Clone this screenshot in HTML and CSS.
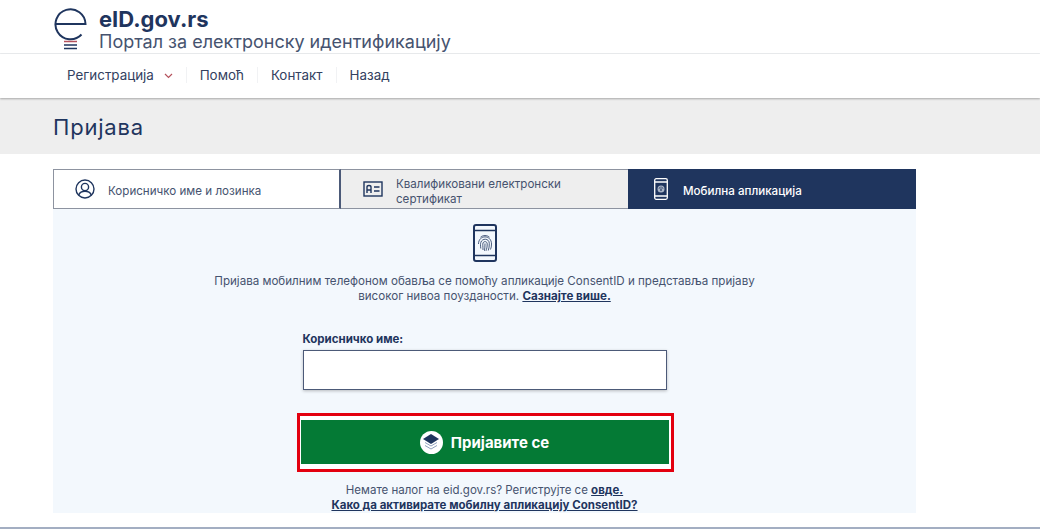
FILE: index.html
```html
<!DOCTYPE html>
<html lang="sr">
<head>
    <meta charset="UTF-8">
    <meta name="viewport" content="width=device-width, initial-scale=1.0">
    <title>Пријава</title>
    <link rel="stylesheet" href="styles.css">
</head>
<body>

<header class="site-header">
    <svg class="logo" width="34" height="44" viewBox="0 0 34 44" fill="none">
        <path d="M1.500 17 H31.500 A15 15 0 1 0 27.500 27.500" stroke="#1f355e" stroke-width="2"/>
        <path d="M10 34.500 H23" stroke="#b5525c" stroke-width="1.500"/>
        <path d="M10 38 H23 M10 41.500 H23" stroke="#1f355e" stroke-width="1.500"/>
    </svg>
    <div class="brand">
        <div class="brand-name">eID.gov.rs</div>
        <div class="brand-sub">Портал за електронску идентификацију</div>
    </div>
</header>

<nav class="main-nav">
    <a class="nav-item">Регистрација
        <svg class="caret" width="9" height="6" viewBox="0 0 9 6" fill="none"><path d="M1 1 L4.500 4.500 L8 1" stroke="#b5525c" stroke-width="1.200"/></svg>
    </a>
    <a class="nav-item">Помоћ</a>
    <a class="nav-item">Контакт</a>
    <a class="nav-item nav-last">Назад</a>
</nav>

<div class="page-title">
    <h1>Пријава</h1>
</div>

<main class="login">
    <div class="tabs">
        <div class="tab tab-user">
            <svg width="20" height="20" viewBox="0 0 20 20" fill="none" stroke="#1f355e" stroke-width="1.400">
                <circle cx="10" cy="10" r="9"/>
                <circle cx="10" cy="8" r="3.600"/>
                <path d="M3.800 16 C5 12.800 7.500 12.300 10 12.300 C12.500 12.300 15 12.800 16.200 16"/>
            </svg>
            <span>Корисничко име и лозинка</span>
        </div>
        <div class="tab tab-cert">
            <svg width="20" height="16" viewBox="0 0 20 16" fill="none" stroke="#1f355e" stroke-width="1.400">
                <rect x="1" y="1" width="18" height="14"/>
                <path d="M4 12 V6 Q4 4.500 6 4.500 Q8 4.500 8 6 V12 M4 9 H8"/>
                <path d="M11 6 H16.500 M11 10 H16.500"/>
            </svg>
            <span>Квалификовани електронски сертификат</span>
        </div>
        <div class="tab tab-mobile">
            <svg width="14" height="22" viewBox="0 0 14 22" fill="none" stroke="#fff" stroke-width="1.300">
                <rect x="0.700" y="0.700" width="12.600" height="20.600" rx="1.500"/>
                <path d="M0.700 4 H13.300 M0.700 18 H13.300"/>
                <circle cx="7" cy="11" r="3.500" fill="#aab4c6" stroke="none"/>
                <path d="M5 11 A2 2 0 0 1 9 11 M6.500 13 V11 A0.500 0.500 0 0 1 7.500 11 V13" stroke="#1f355e" stroke-width="0.600"/>
            </svg>
            <span>Мобилна апликација</span>
        </div>
    </div>

    <section class="panel">
        <svg class="phone" width="24" height="38" viewBox="0 0 24 38" fill="none" stroke="#1f355e">
            <rect x="1" y="1" width="22" height="36" rx="2" stroke-width="2"/>
            <path d="M1 6.500 H23 M1 31.500 H23" stroke-width="1.500"/>
            <g stroke-width="0.800">
                <path d="M5.500 20 C5.500 10.500 18.500 10.500 18.500 20 C18.500 22 18.200 24 17.500 25.500"/>
                <path d="M7.800 24.500 C7.300 21 7.500 19.500 7.800 18.500 C9 14 16.300 14 16.300 19.500 C16.300 22 16 24.500 15.300 26.500"/>
                <path d="M10 26 C10 22 9.500 20.500 10 19 C11 16.800 14.200 17.200 14.200 20 C14.200 23 13.700 25 13 26.800"/>
                <path d="M12 19.500 C12 22 11.800 24.500 11.500 26.800"/>
                <path d="M7.500 13.200 C10 11 14 11 16.500 13.200"/>
            </g>
        </svg>

        <p class="intro">Пријава мобилним телефоном обавља се помоћу апликације ConsentID и представља пријаву високог нивоа поузданости. <a class="link">Сазнајте више.</a></p>

        <form class="login-form">
            <label class="field-label" for="username">Корисничко име:</label>
            <input class="field-input" id="username" type="text">
            <div class="btn-frame">
                <button class="btn-login" type="button">
                    <span class="btn-icon">
                        <svg width="18" height="16" viewBox="0 0 18 16" fill="none">
                            <path d="M9 0 L17 5 L9 10 L1 5 Z" fill="#1f355e"/>
                            <path d="M3 8.500 L9 12 L15 8.500 M3 11.500 L9 15 L15 11.500" stroke="#8fa0bd" stroke-width="1"/>
                        </svg>
                    </span>
                    Пријавите се
                </button>
            </div>
        </form>

        <p class="foot">Немате налог на eid.gov.rs? Региструјте се <a class="link">овде.</a><br><a class="link">Како да активирате мобилну апликацију ConsentID?</a></p>
    </section>
</main>

<div class="page-end"></div>

</body>
</html>
```

FILE: styles.css
```css
* {
    box-sizing: border-box;
}

body {
    font-family: Inter, "Noto Sans", sans-serif;
    color: #1f355e;
    background-color: #fff;
    margin: 0;
    height: 529px;
    overflow: hidden;
}

.site-header {
    display: flex;
    align-items: flex-start;
    height: 54px;
    padding: 7px 0 0 54px;
    border-bottom: 1px solid #eceef0;
}

.logo {
    flex-shrink: 0;
}

.brand {
    margin-left: 11px;
    margin-top: 1px;
}

.brand-name {
    font-size: 22px;
    line-height: 23px;
    font-weight: 700;
}

.brand-sub {
    font-size: 18px;
    line-height: 22px;
    color: #46536f;
}

.main-nav {
    display: flex;
    align-items: center;
    height: 44px;
    padding: 0 0 2px 67px;
    box-shadow: 0 1px 2px rgba(0, 0, 0, 0.3);
    position: relative;
}

.nav-item {
    font-size: 13.4px;
    color: #33415f;
    padding-right: 13px;
    margin-right: 13px;
    border-right: 1px solid #f1f2f4;
}

.nav-last {
    border-right: none;
}

.caret {
    margin-left: 6px;
    vertical-align: 1px;
}

.page-title {
    background-color: #eeeeee;
    height: 56px;
    padding: 2px 0 0 53px;
    display: flex;
    align-items: center;
}

h1 {
    font-size: 22px;
    font-weight: 400;
    margin: 0;
    letter-spacing: 0.8px;
}

.login {
    width: 863px;
    margin: 15px 0 0 53px;
}

.tabs {
    display: flex;
    height: 40px;
}

.tab {
    display: flex;
    align-items: center;
    font-size: 11.6px;
    line-height: 15px;
    color: #46536f;
    border: solid #8d93a0;
    border-width: 1px 0;
}

.tab span {
    padding-top: 4px;
}

.tab-user {
    width: 288px;
    padding-left: 21px;
    gap: 13px;
    background-color: #fff;
    border-left-width: 1px;
    border-right: 2px solid #4c5a78;
}

.tab-cert {
    width: 287px;
    padding-left: 22px;
    gap: 13px;
    background-color: #eeeeee;
}

.tab-cert span {
    width: 190px;
    padding-top: 6px;
}

.tab-mobile {
    flex: 1;
    padding-left: 26px;
    gap: 15px;
    background-color: #1f355e;
    border-color: #1f355e;
    color: #fff;
    font-weight: 500;
}

.panel {
    height: 304px;
    background-color: #f3f8fd;
    padding-top: 15px;
    display: flex;
    flex-direction: column;
    align-items: center;
    text-align: center;
}

.phone {
    flex-shrink: 0;
}

.intro {
    width: 560px;
    margin: 12px 0 0;
    font-size: 11.6px;
    line-height: 15px;
    color: #46536f;
}

.link {
    font-weight: 700;
    color: #1f355e;
    text-decoration: underline;
}

.login-form {
    width: 378px;
    margin-top: 28px;
    text-align: left;
    display: flex;
    flex-direction: column;
    align-items: center;
}

.field-label {
    align-self: flex-start;
    margin-left: 7px;
    font-size: 11.5px;
    font-weight: 700;
    line-height: 14px;
}

.field-input {
    width: 364px;
    height: 40px;
    margin-top: 4px;
    background-color: #fff;
    border: 1px solid #4c5a78;
    box-shadow: 0 1px 3px rgba(0, 0, 0, 0.25);
    flex-shrink: 0;
}

.btn-frame {
    align-self: flex-end;
    width: 377px;
    height: 59px;
    margin-top: 23px;
    padding: 4px 2px 5px 1px;
    border: 3px solid #e3000f;
    background-color: #fff;
    flex-shrink: 0;
}

.btn-login {
    display: flex;
    align-items: center;
    justify-content: center;
    gap: 8px;
    width: 100%;
    height: 100%;
    padding: 0;
    border: none;
    background-color: #047a35;
    color: #fff;
    font-family: inherit;
    font-size: 15px;
    font-weight: 700;
}

.btn-icon {
    display: flex;
    align-items: center;
    justify-content: center;
    width: 23px;
    height: 23px;
    border-radius: 50%;
    background-color: #fff;
}

.foot {
    margin: 11px 0 0;
    font-size: 11.5px;
    line-height: 15px;
    color: #46536f;
}

.page-end {
    height: 2px;
    margin-top: 14px;
    background-color: #a3aec2;
}
```
